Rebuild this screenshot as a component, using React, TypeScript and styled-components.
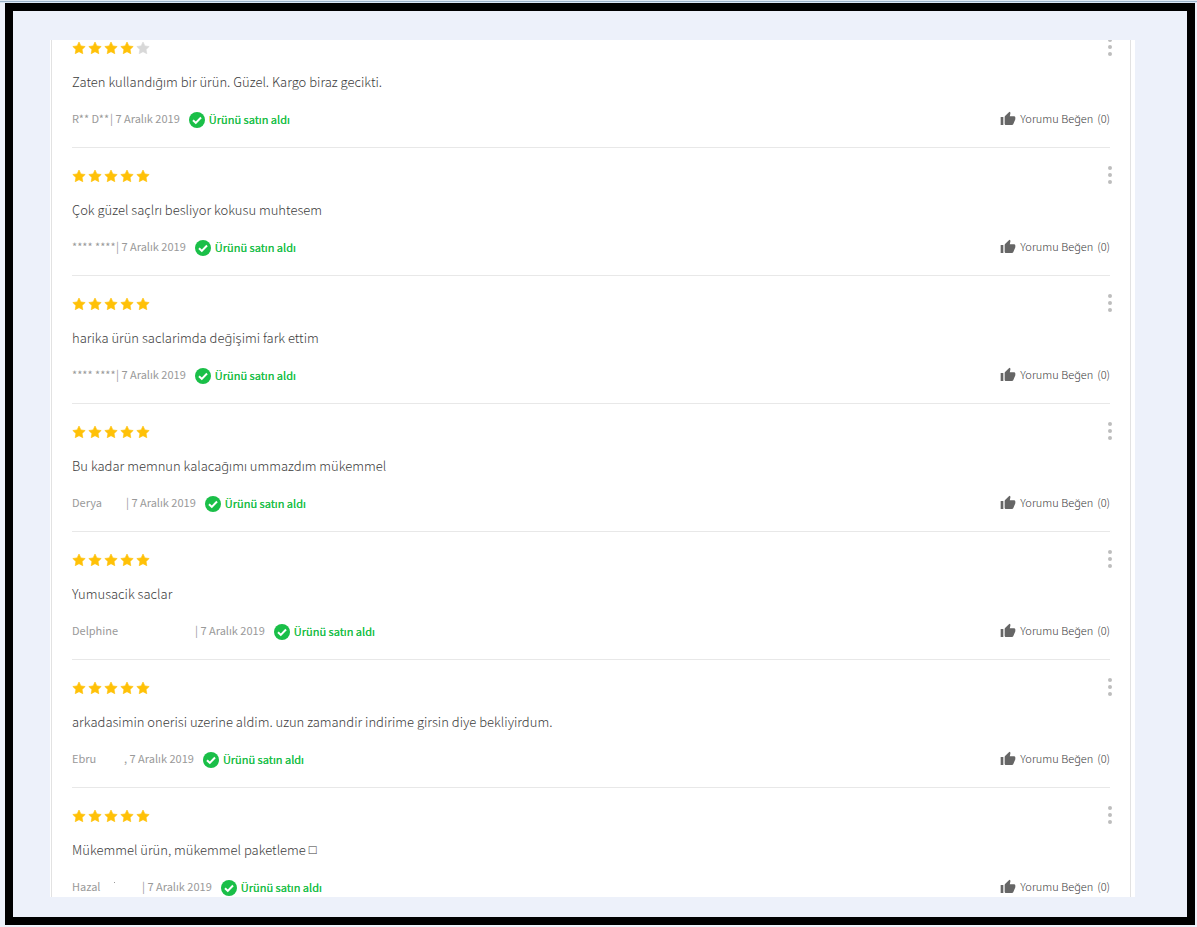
import React from "react";
import styled, { createGlobalStyle } from "styled-components";

const GlobalStyle = createGlobalStyle`
  * { box-sizing: border-box; }
  body {
    margin: 0;
    background: #edf1fa;
    font-family: "Noto Sans CJK SC", "Noto Sans", sans-serif;
    color: #3c3c3c;
  }
  button { font: inherit; color: inherit; background: none; border: 0; padding: 0; cursor: pointer; }
`;

const Page = styled.div`
  height: 100vh;
  display: flex;
  flex-direction: column;
  padding: 0 2px 2px 5px;
`;

const TopRule = styled.div`
  flex: none;
  height: 3px;
  margin: 0 -2px 0 -5px;
  background: linear-gradient(#dfe9f3 0 1px, #9bb3c9 1px 2px, #dbe7f5 2px 3px);
`;

const Frame = styled.main`
  flex: 1;
  min-height: 0;
  display: flex;
  border: 8px solid #000;
  padding: 29px 52px 20px 37px;
`;

const Panel = styled.section`
  flex: 1;
  min-width: 0;
  overflow: hidden;
  background: #fff;
  padding: 0 4px 0 1px;
`;

const List = styled.ul`
  list-style: none;
  margin: -20px 0 0;
  padding: 0 20px;
  border: 1px solid #e2e2e2;
  border-width: 0 1px;
`;

const Review = styled.li`
  height: 128px;
  padding-top: 18px;
  border-bottom: 1px solid #e8e8e8;
`;

const Row = styled.div`
  display: flex;
  align-items: flex-start;
  justify-content: space-between;
`;

const Stars = styled.div`
  display: flex;
  height: 20px;
  align-items: center;
`;

const MenuButton = styled.button`
  display: flex;
  justify-content: center;
  width: 20px;
  height: 18px;
  margin-right: -10px;
`;

const Comment = styled.p`
  display: flex;
  align-items: center;
  gap: 3px;
  margin: 14px 0 16px;
  font-size: 13px;
  font-weight: 300;
  line-height: 20px;
`;

const Glyph = styled.span`
  font-family: "DejaVu Sans", sans-serif;
  font-size: 13px;
`;

const Footer = styled(Row)`
  align-items: center;
  height: 20px;
  font-size: 11px;
  line-height: 20px;
`;

const Meta = styled.div`
  display: flex;
  align-items: center;
  color: #999;
`;

const Author = styled.span<{ $width: number }>`
  display: flex;
  gap: 14px;
  width: ${(p) => p.$width}px;
  white-space: pre;
`;

const Speck = styled.i`
  width: 1px;
  height: 1px;
  margin-top: 6px;
  background: #999;
`;

const Bought = styled.span`
  display: flex;
  align-items: center;
  gap: 4px;
  margin: 2px 0 0 9px;
  color: #1fbf4c;
  text-shadow: 0 0 0 #1fbf4c;
`;

const LikeButton = styled.button`
  display: flex;
  align-items: center;
  gap: 4px;
  font-weight: 300;
`;

const Icon = styled.svg`
  display: block;
  width: 16px;
  height: 16px;
`;

const FooterIcon = styled(Icon)`
  box-sizing: content-box;
  padding-top: 2px;
`;

const Star = ({ on }: { on: boolean }) => (
  <Icon viewBox="0 0 16 16" aria-hidden="true">
    <path
      d="M7 2l1.9 3.9 4.3.6-3.1 3 .7 4.2L7 11.7l-3.8 2 .7-4.2-3.1-3 4.3-.6z"
      fill={on ? "#ffc107" : "#d8d8d8"}
      stroke={on ? "#ffc107" : "#d8d8d8"}
      strokeWidth="0.6"
      strokeLinejoin="round"
    />
  </Icon>
);

const Dots = () => (
  <svg width="4" height="18" viewBox="0 0 4 18" fill="#bdbdbd" aria-hidden="true">
    <circle cx="2" cy="2" r="2" />
    <circle cx="2" cy="9" r="2" />
    <circle cx="2" cy="16" r="2" />
  </svg>
);

const Check = () => (
  <FooterIcon viewBox="0 0 16 16" aria-hidden="true">
    <circle cx="8" cy="8" r="8" fill="#1abf48" />
    <path d="M4 8.2l2.8 2.7 5.2-5.4" fill="none" stroke="#fff" strokeWidth="2" />
  </FooterIcon>
);

const Thumb = () => (
  <FooterIcon viewBox="0 0 24 24" fill="#666" aria-hidden="true">
    <path d="M1 21h4V9H1v12zm22-11c0-1.1-.9-2-2-2h-6.31l.95-4.57.03-.32c0-.41-.17-.79-.44-1.06L14.17 1 7.59 7.59C7.22 7.95 7 8.45 7 9v10c0 1.1.9 2 2 2h9c.83 0 1.54-.5 1.84-1.22l3.02-7.05c.09-.23.14-.47.14-.73v-2z" />
  </FooterIcon>
);

type Item = {
  stars: number;
  text: string;
  author: string;
  width: number;
  mark?: string;
  glyph?: string;
  speck?: boolean;
};

const reviews: Item[] = [
  { stars: 4, text: "Zaten kullandığım bir ürün. Güzel. Kargo biraz gecikti.", author: "R** D**", width: 38 },
  { stars: 5, text: "Çok güzel saçlrı besliyor kokusu muhtesem", author: "**** ****", width: 44 },
  { stars: 5, text: "harika ürün saclarimda değişimi fark ettim", author: "**** ****", width: 44 },
  { stars: 5, text: "Bu kadar memnun kalacağımı ummazdım mükemmel", author: "Derya", width: 54 },
  { stars: 5, text: "Yumusacik saclar", author: "Delphine", width: 123 },
  { stars: 5, text: "arkadasimin onerisi uzerine aldim. uzun zamandir indirime girsin diye bekliyirdum.", author: "Ebru", width: 52, mark: "," },
  { stars: 5, text: "Mükemmel ürün, mükemmel paketleme", glyph: "□", author: "Hazal", width: 70, speck: true },
];

export default function App() {
  return (
    <Page>
      <GlobalStyle />
      <TopRule />
      <Frame>
        <Panel>
          <List>
            {reviews.map((r, i) => (
              <Review key={i}>
                <Row>
                  <Stars role="img" aria-label={`${r.stars} / 5`}>
                    {[1, 2, 3, 4, 5].map((n) => (
                      <Star key={n} on={n <= r.stars} />
                    ))}
                  </Stars>
                  <MenuButton type="button" aria-label="Menü">
                    <Dots />
                  </MenuButton>
                </Row>
                <Comment>
                  {r.text}
                  {r.glyph && <Glyph>{r.glyph}</Glyph>}
                </Comment>
                <Footer>
                  <Meta>
                    <Author $width={r.width}>
                      {r.author}
                      {r.speck && <Speck />}
                    </Author>
                    <span>{r.mark ?? "|"} 7 Aralık 2019</span>
                    <Bought>
                      <Check />
                      Ürünü satın aldı
                    </Bought>
                  </Meta>
                  <LikeButton type="button">
                    <Thumb />
                    <span>Yorumu Beğen</span>
                    <span>(0)</span>
                  </LikeButton>
                </Footer>
              </Review>
            ))}
          </List>
        </Panel>
      </Frame>
    </Page>
  );
}
